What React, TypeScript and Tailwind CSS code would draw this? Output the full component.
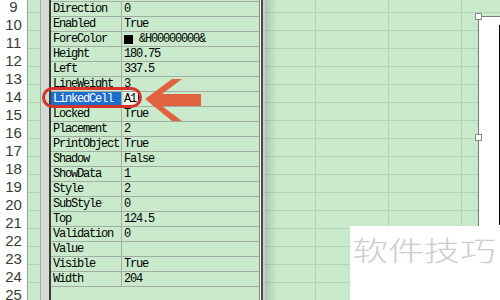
import React from 'react';

const props: [string, string][] = [
  ['Direction', '0'],
  ['Enabled', 'True'],
  ['ForeColor', '&H00000000&'],
  ['Height', '180.75'],
  ['Left', '337.5'],
  ['LineWeight', '3'],
  ['LinkedCell', 'A1'],
  ['Locked', 'True'],
  ['Placement', '2'],
  ['PrintObject', 'True'],
  ['Shadow', 'False'],
  ['ShowData', '1'],
  ['Style', '2'],
  ['SubStyle', '0'],
  ['Top', '124.5'],
  ['Validation', '0'],
  ['Value', ''],
  ['Visible', 'True'],
  ['Width', '204'],
];

const rowNumbers = Array.from({ length: 17 }, (_, i) => i + 9);

function PropertyRow({ name, value }: { name: string; value: string }) {
  const linked = name === 'LinkedCell';
  return (
    <div className="flex h-[15px] border-b border-[#a3ada4] leading-[14px]">
      <div
        className={`w-[71px] shrink-0 border-r border-[#a3ada4] pl-[2px] ${
          linked ? 'bg-[#1c6dd0] text-white' : ''
        }`}
      >
        {name}
      </div>
      <div className="flex items-center pl-[2px]">
        {name === 'ForeColor' && <span className="mr-[6px] inline-block h-[9px] w-[9px] bg-black" />}
        {linked ? (
          <span className="flex items-center bg-[#eef7ee] pr-[1px]">
            {value}
            <span className="ml-[2px] inline-block h-[11px] w-px bg-black" />
          </span>
        ) : (
          value
        )}
      </div>
    </div>
  );
}

export default function App() {
  return (
    <div className="relative flex h-[300px] w-[500px] overflow-hidden bg-[#c8eacb]">
      {/* Row header */}
      <div className="w-[28px] shrink-0 border-r border-[#9aa39b] bg-white">
        <div className="-mt-[5px] flex flex-col">
          {rowNumbers.map((n) => (
            <div
              key={n}
              className="flex h-[18px] items-center justify-center pt-[6px] font-['Liberation_Sans',sans-serif] text-[15px] text-[#3a3a3a]"
            >
              {n}
            </div>
          ))}
        </div>
      </div>

      {/* Sheet grid */}
      <div className="flex-1 overflow-hidden">
        <div className="-mt-[5px] flex flex-col">
          {Array.from({ length: 18 }, (_, r) => (
            <div key={r} className="grid h-[18px] grid-cols-[215px_73px_73px_73px_73px]">
              {Array.from({ length: 5 }, (_, c) => (
                <div key={c} className="border-r border-b border-[#b3d1b6]" />
              ))}
            </div>
          ))}
        </div>
      </div>

      {/* Properties window */}
      <div className="absolute top-0 bottom-0 left-[40px] flex w-[225px]">
        <div className="w-px bg-[#98b39b]" />
        <div className="w-[8px] bg-[#d5dcd5]" />
        <div className="w-[2px] bg-[#3a3a3a]" />
        <div className="w-[208px] bg-[#c9eacb] font-['Liberation_Mono',monospace] text-[12px] tracking-[-1.2px] text-black">
          <div className="mt-[1px] border-t border-[#a3ada4]">
            {props.map(([n, v]) => (
              <PropertyRow key={n} name={n} value={v} />
            ))}
          </div>
        </div>
        <div className="w-px bg-[#8a8a8a]" />
        <div className="w-px bg-white" />
        <div className="w-[2px] bg-[#4a4a4a]" />
        <div className="w-[2px] bg-[#cfcfcf]" />
      </div>
      <div className="absolute top-0 bottom-0 left-[265px] w-[12px] bg-gradient-to-r from-black/15 to-transparent" />

      {/* Highlight ring and arrow */}
      <div className="absolute top-[87px] left-[42px] h-[21px] w-[100px] rounded-full border-[3px] border-[#d7322c]" />
      <svg className="absolute top-[75px] left-[140px]" width="65" height="50" viewBox="0 0 65 50">
        <polygon
          points="5,24 32,4 42,4 22,19 61,19 61,31 22,31 42,46 32,46"
          fill="#e0623f"
        />
      </svg>

      {/* Selected shape on the sheet */}
      <div className="absolute top-[16px] right-0 bottom-0 left-[478px] border-t border-l border-[#7a7a7a] bg-white" />
      <div className="absolute top-[25px] left-[499px] h-[200px] w-px bg-black" />
      <div className="absolute top-[13px] left-[475px] h-[7px] w-[7px] border border-[#8a8a8a] bg-white" />
      <div className="absolute top-[134px] left-[475px] h-[7px] w-[7px] border border-[#8a8a8a] bg-white" />

      {/* Watermark */}
      <div className="absolute top-[226px] left-[350px] h-[74px] w-[150px] bg-white pt-[9px] pl-[2px]">
        <div className="origin-top scale-y-75 font-['Noto_Sans_CJK_SC',sans-serif] text-[36px] font-light leading-none text-[#cdcdcd]">
          软件技巧
        </div>
      </div>
    </div>
  );
}
